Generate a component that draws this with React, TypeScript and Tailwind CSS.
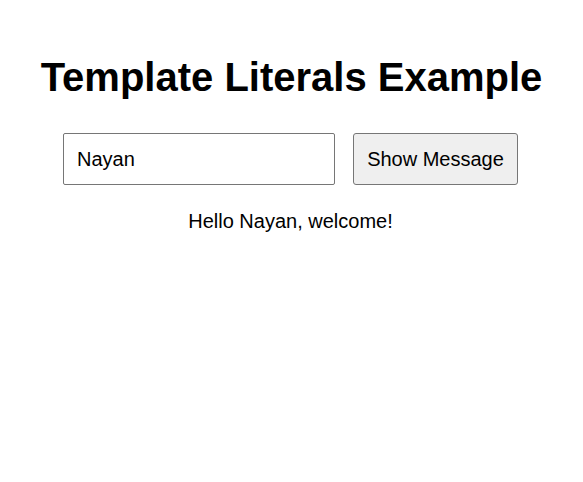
import React, { useState } from "react";

export default function App() {
  const [name, setName] = useState("Nayan");
  const [msg, setMsg] = useState("Hello Nayan, welcome!");
  return (
    <div className="w-full min-h-screen bg-white text-black font-['Liberation_Sans',Arial,sans-serif] flex flex-col items-center pt-[54px]">
      <h1 className="text-[40px] leading-[46px] font-bold m-0">Template Literals Example</h1>
      <div className="flex items-center gap-[18px] mt-[33px] mr-[2px]">
        <input
          value={name}
          onChange={(e) => setName(e.target.value)}
          className="w-[272px] h-[52px] px-[13px] text-[20px] border border-[#767676] rounded-[2px] outline-none"
        />
        <button
          onClick={() => setMsg(`Hello ${name}, welcome!`)}
          className="h-[52px] w-[165px] text-[20px] bg-[#efefef] border border-[#767676] rounded-[3px]"
        >
          Show Message
        </button>
      </div>
      <p className="text-[20px] leading-[23px] mt-[25px] mr-[2px]">{msg}</p>
    </div>
  );
}
